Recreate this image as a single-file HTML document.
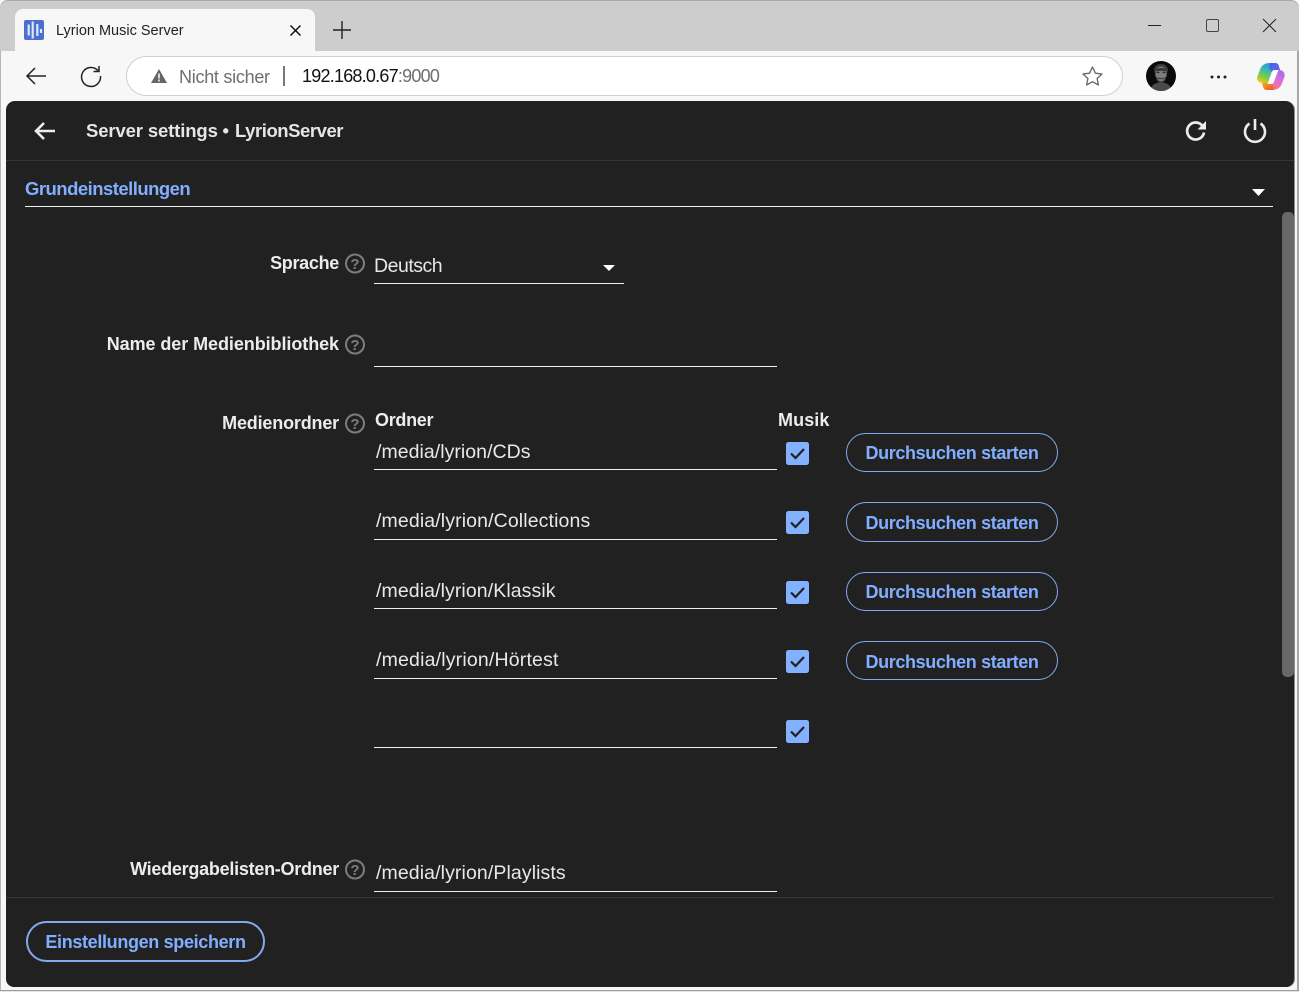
<!DOCTYPE html>
<html lang="de"><head><meta charset="utf-8"><title>Lyrion Music Server</title>
<style>
html,body{margin:0;padding:0;width:1299px;height:992px;overflow:hidden;background:#f7f7f7;font-family:"Liberation Sans",sans-serif}
.a{position:absolute}
.t{position:absolute;white-space:nowrap;line-height:20px;height:20px}
.lbl{color:#ececec;font-size:18px;font-weight:bold;text-align:right;right:960px}
.val{color:#e8e8e8;font-size:19.5px}
.line{position:absolute;height:1px;background:#efefef}
.btn{position:absolute;box-sizing:border-box;border:1.4px solid #82a9ee;border-radius:20px;left:846px;width:212px;height:39px;color:#82aeff;font-size:18px;font-weight:bold;letter-spacing:-.37px;text-align:center;line-height:39px}
.cb{position:absolute;left:786px;width:23px;height:23px;border-radius:2.5px;background:#82b1ff}
svg{position:absolute;overflow:visible}
</style></head><body>
<!-- browser chrome -->
<div class="a" style="left:0;top:0;width:1299px;height:51px;background:#cdcdcd;border-radius:8px 8px 0 0;box-shadow:inset 0 1px 0 #aaa"></div>
<div class="a" style="left:15px;top:9px;width:300px;height:42px;background:#f7f7f7;border-radius:8px 8px 0 0"></div>
<div class="a" style="left:24px;top:20px;width:20px;height:20px;background:#4a6fd0;border-radius:2px"></div>
<svg style="left:24px;top:20px" width="20" height="20"><path d="M4.700 4.500v11M8.700 1.500v17M13.300 4v12M17 9v4" stroke="#dfe6f8" stroke-width="2.200" fill="none"/></svg>
<div class="t" style="left:56px;top:21px;font-size:14.5px;color:#222">Lyrion Music Server</div>
<svg style="left:290px;top:25px" width="11" height="11"><path d="M.5.5l10 10M10.500.5l-10 10" stroke="#111" stroke-width="1.500"/></svg>
<svg style="left:333px;top:21px" width="18" height="18"><path d="M9 0v18M0 9h18" stroke="#222" stroke-width="1.400"/></svg>
<div class="a" style="left:1148px;top:25px;width:13px;height:1px;background:#222"></div>
<div class="a" style="left:1206px;top:19px;width:11px;height:11px;border:1.200px solid #444;border-radius:2px"></div>
<svg style="left:1263px;top:19px" width="13" height="13"><path d="M0 0l13 13M13 0L0 13" stroke="#222" stroke-width="1"/></svg>
<!-- toolbar -->
<svg style="left:26px;top:67px" width="20" height="18"><path d="M20 9H1M9 1L1 9l8 8" stroke="#222" stroke-width="1.500" fill="none"/></svg>
<svg style="left:80px;top:65px" width="22" height="22"><path d="M18 5.500A9.500 9.500 0 1 0 20.500 11M19 1v5.500h-5.500" stroke="#222" stroke-width="1.500" fill="none"/></svg>
<div class="a" style="left:126px;top:56px;width:995px;height:38px;background:#fff;border:1px solid #d0d0d0;border-radius:20px"></div>
<svg style="left:151px;top:69px" width="16" height="14"><path d="M8 0l8 14H0z" fill="#666"/><path d="M8 4.500v5M8 10.500v2" stroke="#fff" stroke-width="1.500"/></svg>
<div class="t" style="left:179px;top:67px;font-size:18px;color:#6e6e6e;letter-spacing:-.27px">Nicht sicher</div>
<div class="a" style="left:283px;top:66px;width:1.500px;height:20px;background:#777"></div>
<div class="t" style="left:302px;top:66px;font-size:18px;letter-spacing:-.77px;color:#111">192.168.0.67<span style="color:#6e6e6e">:9000</span></div>
<svg style="left:1082px;top:66px" width="21" height="20"><path d="M10.500 1l2.900 6.200 6.600.8-4.900 4.500 1.300 6.500-5.900-3.300-5.900 3.300 1.300-6.500L1 8l6.600-.8z" fill="none" stroke="#666" stroke-width="1.300" stroke-linejoin="round"/></svg>
<!-- avatar -->
<svg style="left:1146px;top:61px" width="30" height="30">
<circle cx="15" cy="15" r="15" fill="#0a0a0a"/>
<path d="M8 8.500C8.500 4.500 11.500 3 15 3s6.500 1.500 7 5.500l-.5 3H8.500z" fill="#3a3a3a"/>
<ellipse cx="15" cy="13" rx="5.700" ry="7.500" fill="#7c7c7c"/>
<path d="M10 8.500c2-2 8-2 10 0l-.5 2c-3-1-6-1-9 0z" fill="#333"/>
<path d="M10.500 11.500h3M16.500 11.500h3" stroke="#2c2c2c" stroke-width="1.200"/>
<path d="M12 17.500h6M10.500 16c.5 4 2.500 5 4.500 5s4-1 4.500-5" stroke="#3e3e3e" stroke-width="1.300" fill="none"/>
<path d="M5.500 26.500c1-3.500 5-5 9.500-5s8.500 1.500 9.500 5C22 28.800 18.500 30 15 30s-7-1.200-9.500-3.500z" fill="#4a4a4a"/>
</svg>
<svg style="left:1210px;top:75px" width="17" height="4"><circle cx="2" cy="2" r="1.500" fill="#222"/><circle cx="8.500" cy="2" r="1.500" fill="#222"/><circle cx="15" cy="2" r="1.500" fill="#222"/></svg>
<!-- copilot -->
<svg style="left:1257px;top:63px" width="28" height="27">
<defs><linearGradient id="g1" x1=".7" y1="0" x2=".2" y2="1"><stop offset="0" stop-color="#1f8cf0"/><stop offset=".45" stop-color="#3dc0a0"/><stop offset=".75" stop-color="#8ccc3c"/><stop offset="1" stop-color="#f6c71e"/></linearGradient>
<linearGradient id="g2" x1=".7" y1="0" x2=".3" y2="1"><stop offset="0" stop-color="#a56ef0"/><stop offset=".5" stop-color="#e070d0"/><stop offset=".8" stop-color="#f7709a"/><stop offset="1" stop-color="#f5803a"/></linearGradient>
<linearGradient id="g3" x1="0" y1="0" x2="1" y2="1"><stop offset="0" stop-color="#2f6ce8"/><stop offset="1" stop-color="#7a5cf0"/></linearGradient>
<linearGradient id="g4" x1="0" y1="0" x2="1" y2="1"><stop offset="0" stop-color="#f0b020"/><stop offset="1" stop-color="#f0502c"/></linearGradient></defs>
<path d="M13 0h5c1.800 0 3 .8 3.600 2.500L23 7h-5c-2 0-3 1-3.600 2.800L11 20H5.500C1.500 20-.5 17 .2 14L3 6.500C4.500 2 8 0 13 0z" fill="url(#g1)"/>
<path d="M13 0h5c1.800 0 3 .8 3.600 2.500L23 7h-7l-1 2-3-4z" fill="url(#g3)"/>
<path d="M22 7c3.800 0 6 2.800 5.700 6L25 20.500C23.500 24.500 20 27 15.500 27H10c-1.800 0-3-.8-3.600-2.500L5 20h5c2 0 3.200-1 3.800-2.800L17 7z" fill="url(#g2)"/>
<path d="M5.500 20H11l.5 0c1 0 1.800-.3 2.500-1l2 4 .5 4H10c-1.800 0-3-.8-3.600-2.500z" fill="url(#g4)"/>
<path d="M15.300 8.500c.5-1 1.200-1.500 2.700-1.500h3.500l-4.800 12.500c-.4 1-1.200 1.500-2.700 1.500h-3.500z" fill="#fff"/>
</svg>
<!-- window frame -->
<div class="a" style="left:0;top:51px;width:1px;height:939px;background:#b5b5b5"></div>
<div class="a" style="left:1297px;top:51px;width:2px;height:939px;background:#a8a8a8"></div>
<div class="a" style="left:0;top:990px;width:1299px;height:1px;background:#9c9c9c"></div>
<div class="a" style="left:0;top:991px;width:1299px;height:1px;background:#e4e4e4"></div>
<!-- page -->
<div class="a" style="left:6px;top:101px;width:1288px;height:886px;background:#212121;border-radius:9px 9px 8px 8px;box-shadow:1px 0 0 #8a8a8a"></div>
<div class="a" style="left:6px;top:160px;width:1288px;height:1px;background:#363636"></div>
<svg style="left:33px;top:121px" width="22" height="20"><path d="M22 10H3M11 2l-8 8 8 8" stroke="#ececec" stroke-width="2.600" fill="none"/></svg>
<div class="t" style="left:86px;top:121px;font-size:18.500px;font-weight:bold;color:#e6e6e6;letter-spacing:-.13px">Server settings</div>
<div class="t" style="left:222.500px;top:121px;font-size:18.500px;font-weight:bold;color:#e6e6e6">•</div>
<div class="t" style="left:235px;top:121px;font-size:18.500px;font-weight:bold;color:#e6e6e6;letter-spacing:-.45px">LyrionServer</div>
<svg style="left:1185px;top:120px" width="22" height="21"><path d="M17.500 6A8.500 8.500 0 1 0 19 12.500" stroke="#ececec" stroke-width="2.700" fill="none"/><path d="M21 1v8.500h-8.500z" fill="#ececec"/></svg>
<svg style="left:1243px;top:118px" width="24" height="24"><path d="M12 1v11" stroke="#ececec" stroke-width="2.600" fill="none"/><path d="M6.500 5.500a10 10 0 1 0 11 0" stroke="#ececec" stroke-width="2.600" fill="none"/></svg>
<div class="t" style="left:25px;top:179px;font-size:18.500px;font-weight:bold;color:#82aeff;letter-spacing:-.53px">Grundeinstellungen</div>
<svg style="left:1252px;top:189px" width="13" height="7"><path d="M0 0h13L6.500 7z" fill="#fff"/></svg>
<div class="line" style="left:25px;top:206px;width:1248px"></div>
<div class="a" style="left:1282px;top:212px;width:12px;height:465px;background:#686868;border-radius:5px"></div>

<div class="t lbl" style="top:253px;letter-spacing:-.3px">Sprache</div>
<div class="t val" style="left:374px;top:256px;letter-spacing:-.48px">Deutsch</div>
<svg style="left:603px;top:265px" width="12" height="6"><path d="M0 0h12L6 6z" fill="#fff"/></svg>
<div class="line" style="left:374px;top:283px;width:250px"></div>

<div class="t lbl" style="top:334px;letter-spacing:-.07px">Name der Medienbibliothek</div>
<div class="line" style="left:374px;top:366px;width:403px"></div>

<div class="t lbl" style="top:413px;letter-spacing:-.18px">Medienordner</div>
<div class="t" style="left:375px;top:410px;font-size:18px;font-weight:bold;color:#ececec;letter-spacing:-.3px">Ordner</div>
<div class="t" style="left:778px;top:410px;font-size:18px;font-weight:bold;color:#ececec;letter-spacing:.1px">Musik</div>

<div class="t val" style="left:376px;top:442px;letter-spacing:.04px">/media/lyrion/CDs</div>
<div class="line" style="left:374px;top:469px;width:403px"></div>
<div class="cb" style="top:441.500px"></div>
<div class="btn" style="top:433px">Durchsuchen starten</div>

<div class="t val" style="left:376px;top:511px;letter-spacing:.12px">/media/lyrion/Collections</div>
<div class="line" style="left:374px;top:539px;width:403px"></div>
<div class="cb" style="top:510.500px"></div>
<div class="btn" style="top:502px;height:40px;line-height:41px">Durchsuchen starten</div>

<div class="t val" style="left:376px;top:581px;letter-spacing:.09px">/media/lyrion/Klassik</div>
<div class="line" style="left:374px;top:608px;width:403px"></div>
<div class="cb" style="top:580.500px"></div>
<div class="btn" style="top:572px">Durchsuchen starten</div>

<div class="t val" style="left:376px;top:650px;letter-spacing:.18px">/media/lyrion/Hörtest</div>
<div class="line" style="left:374px;top:678px;width:403px"></div>
<div class="cb" style="top:649.500px"></div>
<div class="btn" style="top:641px;line-height:40px">Durchsuchen starten</div>

<div class="line" style="left:374px;top:747px;width:403px"></div>
<div class="cb" style="top:719.500px"></div>

<svg style="left:786px;top:441.500px" width="23" height="300" fill="none" stroke="#212121" stroke-width="2.200"><path d="M5 11.500l4.500 4.500L18 7"/><path d="M5 80.500l4.500 4.500L18 76"/><path d="M5 150.500l4.500 4.500L18 146"/><path d="M5 219.500l4.500 4.500L18 215"/><path d="M5 289.500l4.500 4.500L18 285"/></svg>

<div class="t lbl" style="top:859px;letter-spacing:-.26px">Wiedergabelisten-Ordner</div>
<div class="t val" style="left:376px;top:863px;letter-spacing:.1px">/media/lyrion/Playlists</div>
<div class="line" style="left:374px;top:891px;width:403px"></div>

<svg style="left:345px;top:0" width="20" height="900" fill="none">
<circle cx="10" cy="263.500" r="9" stroke="#7d7d7d" stroke-width="2"/><text x="10" y="269" text-anchor="middle" font-size="15" font-weight="bold" fill="#7d7d7d" stroke="none" font-family="Liberation Sans">?</text>
<circle cx="10" cy="344.500" r="9" stroke="#7d7d7d" stroke-width="2"/><text x="10" y="350" text-anchor="middle" font-size="15" font-weight="bold" fill="#7d7d7d" stroke="none" font-family="Liberation Sans">?</text>
<circle cx="10" cy="423.500" r="9" stroke="#7d7d7d" stroke-width="2"/><text x="10" y="429" text-anchor="middle" font-size="15" font-weight="bold" fill="#7d7d7d" stroke="none" font-family="Liberation Sans">?</text>
<circle cx="10" cy="869.500" r="9" stroke="#7d7d7d" stroke-width="2"/><text x="10" y="875" text-anchor="middle" font-size="15" font-weight="bold" fill="#7d7d7d" stroke="none" font-family="Liberation Sans">?</text>
</svg>

<div class="a" style="left:6px;top:897px;width:1268px;height:1px;background:#363636"></div>
<div class="a" style="left:26px;top:921px;box-sizing:border-box;width:239px;height:41px;border:2px solid #82a9ee;border-radius:21px;color:#82aeff;font-size:18px;font-weight:bold;letter-spacing:-.34px;text-align:center;line-height:39px">Einstellungen speichern</div>
</body></html>
